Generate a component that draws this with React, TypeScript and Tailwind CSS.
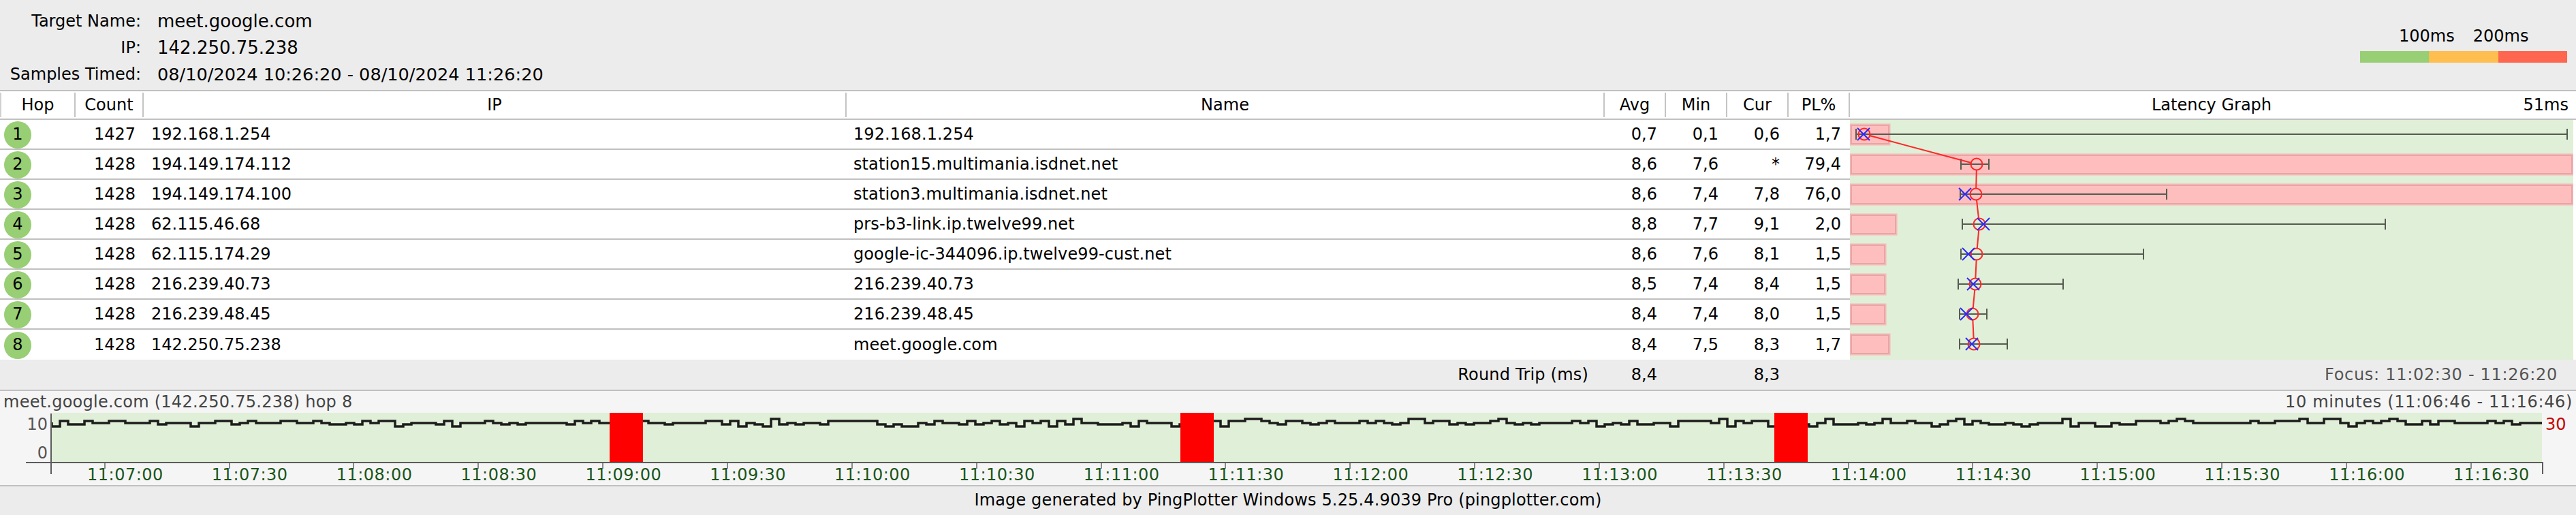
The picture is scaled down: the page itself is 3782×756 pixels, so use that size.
const hops = [
  { n: 1, count: 1427, ip: "192.168.1.254", name: "192.168.1.254", avg: "0,7", min: "0,1", cur: "0,6", pl: "1,7", barEnd: 2775, lo: 2725, hi: 3769, x: 2737, cross: 2736 },
  { n: 2, count: 1428, ip: "194.149.174.112", name: "station15.multimania.isdnet.net", avg: "8,6", min: "7,6", cur: "*", pl: "79,4", barEnd: 3778, lo: 2879, hi: 2920, x: 2902, cross: null },
  { n: 3, count: 1428, ip: "194.149.174.100", name: "station3.multimania.isdnet.net", avg: "8,6", min: "7,4", cur: "7,8", pl: "76,0", barEnd: 3778, lo: 2878, hi: 3181, x: 2901, cross: 2885 },
  { n: 4, count: 1428, ip: "62.115.46.68", name: "prs-b3-link.ip.twelve99.net", avg: "8,8", min: "7,7", cur: "9,1", pl: "2,0", barEnd: 2785, lo: 2881, hi: 3502, x: 2906, cross: 2912 },
  { n: 5, count: 1428, ip: "62.115.174.29", name: "google-ic-344096.ip.twelve99-cust.net", avg: "8,6", min: "7,6", cur: "8,1", pl: "1,5", barEnd: 2769, lo: 2879, hi: 3147, x: 2902, cross: 2890 },
  { n: 6, count: 1428, ip: "216.239.40.73", name: "216.239.40.73", avg: "8,5", min: "7,4", cur: "8,4", pl: "1,5", barEnd: 2769, lo: 2875, hi: 3029, x: 2900, cross: 2897 },
  { n: 7, count: 1428, ip: "216.239.48.45", name: "216.239.48.45", avg: "8,4", min: "7,4", cur: "8,0", pl: "1,5", barEnd: 2769, lo: 2877, hi: 2917, x: 2896, cross: 2887 },
  { n: 8, count: 1428, ip: "142.250.75.238", name: "meet.google.com", avg: "8,4", min: "7,5", cur: "8,3", pl: "1,7", barEnd: 2775, lo: 2877, hi: 2947, x: 2898, cross: 2895 },
];

const times = [
  "11:07:00", "11:07:30", "11:08:00", "11:08:30", "11:09:00", "11:09:30", "11:10:00",
  "11:10:30", "11:11:00", "11:11:30", "11:12:00", "11:12:30", "11:13:00", "11:13:30",
  "11:14:00", "11:14:30", "11:15:00", "11:15:30", "11:16:00", "11:16:30",
];

const outages = [895, 1733, 2605];

// stepped trace, fixed seed so each render is the same
function tracePath() {
  let seed = 7;
  const rnd = () => {
    seed = (seed * 16807) % 2147483647;
    return seed / 2147483647;
  };
  let d = "M76 620";
  for (let x = 76; x < 3732; x += 12) {
    const r = rnd();
    const y = r < 0.08 ? 626 : r < 0.3 ? 623 : r < 0.72 ? 621 : r < 0.94 ? 618 : 615;
    d += ` V${y} H${Math.min(x + 12, 3732)}`;
  }
  return d;
}

function LatencyGraph() {
  const cy = (i: number) => 198 + i * 44 - 1;
  return (
    <svg width={1062} height={352} viewBox="2716 176 1062 352" className="block shrink-0 bg-[#e0efd7]">
      {hops.map((h, i) => (
        <g key={h.n}>
          <rect x={2716} y={cy(i) - 15} width={h.barEnd - 2716} height={31} fill="#ffbebe" stroke="#f6b8b8" strokeWidth={1} />
          <rect x={2718} y={cy(i) - 13} width={h.barEnd - 2720} height={27} fill="none" stroke="#e6a6a6" strokeWidth={2} />
          <path
            d={`M${h.lo} ${cy(i)} H${h.hi} M${h.lo} ${cy(i) - 8} V${cy(i) + 8} M${h.hi} ${cy(i) - 8} V${cy(i) + 8}`}
            stroke="#565b50"
            strokeWidth={2}
            fill="none"
          />
        </g>
      ))}
      {hops.slice(1).map((h, i) => {
        const p = hops[i];
        const y1 = cy(i);
        const y2 = cy(i + 1);
        const len = Math.hypot(h.x - p.x, y2 - y1);
        const ux = (h.x - p.x) / len;
        const uy = (y2 - y1) / len;
        return (
          <line
            key={h.n}
            x1={p.x + ux * 9}
            y1={y1 + uy * 9}
            x2={h.x - ux * 9}
            y2={y2 - uy * 9}
            stroke="#ff2626"
            strokeWidth={2}
          />
        );
      })}
      {hops.map((h, i) => (
        <g key={h.n} fill="none">
          <circle cx={h.x} cy={cy(i)} r={8.5} stroke="#ff2626" strokeWidth={2} />
          {h.cross !== null && (
            <path
              d={`M${h.cross - 9} ${cy(i) - 9} L${h.cross + 9} ${cy(i) + 9} M${h.cross + 9} ${cy(i) - 9} L${h.cross - 9} ${cy(i) + 9}`}
              stroke="#2a2aff"
              strokeWidth={2}
            />
          )}
        </g>
      ))}
    </svg>
  );
}

function TimeChart() {
  return (
    <svg width={3658} height={76} viewBox="75 606 3658 76" className="block shrink-0 overflow-visible">
      <rect x={76} y={606} width={3656} height={72} fill="#e0efd7" />
      <path d={tracePath()} stroke="#1c1c1c" strokeWidth={3.5} fill="none" />
      {outages.map((x) => (
        <rect key={x} x={x} y={606} width={49} height={72} fill="#ff0000" />
      ))}
      <path d="M38 679 H3734 M75 607 V696 M3733 679 V696" stroke="#5c5c5c" strokeWidth={2} fill="none" />
      {times.map((t, i) => {
        const x = Math.round(153.7 + 182.85 * i);
        return <path key={t} d={`M${x} 680 V688`} stroke="#8a8a8a" strokeWidth={2} />;
      })}
    </svg>
  );
}

export default function App() {
  return (
    <div className="w-[3782px] h-[756px] overflow-hidden bg-[#ececec] text-black text-[24px] leading-[28px] font-['DejaVu_Sans',sans-serif] flex flex-col">
      <div className="h-[132px] flex justify-between">
        <div className="grid grid-cols-[207px_1fr] gap-x-[24px] gap-y-[11px] content-start pt-[17px] whitespace-nowrap">
          <div className="text-right">Target Name:</div>
          <div className="text-[26px]">meet.google.com</div>
          <div className="text-right">IP:</div>
          <div className="text-[26px]">142.250.75.238</div>
          <div className="text-right">Samples Timed:</div>
          <div className="text-[25.6px]">08/10/2024 10:26:20 - 08/10/2024 11:26:20</div>
        </div>
        <div className="w-[304px] mr-[13px] pt-[39px]">
          <div className="flex gap-[27px] pl-[57px]">
            <span>100ms</span>
            <span>200ms</span>
          </div>
          <div className="flex h-[17px] mt-[8px]">
            <div className="flex-1 bg-[#98ce74]" />
            <div className="flex-1 bg-[#ffbe50]" />
            <div className="flex-1 bg-[#ff6650]" />
          </div>
        </div>
      </div>

      <div className="h-[44px] bg-white border-y-2 border-[#c0c0c0] flex items-center text-center">
        <div className="w-[111px] h-[36px] leading-[36px] border-x-2 border-l-[#d0d0d0] border-r-[#c4c4c4]">Hop</div>
        <div className="w-[100px] h-[36px] leading-[36px] border-r-2 border-[#c4c4c4]">Count</div>
        <div className="w-[1032px] h-[36px] leading-[36px] border-r-2 border-[#c4c4c4]">IP</div>
        <div className="w-[1113px] h-[36px] leading-[36px] border-r-2 border-[#c4c4c4]">Name</div>
        <div className="w-[90px] h-[36px] leading-[36px] border-r-2 border-[#c4c4c4]">Avg</div>
        <div className="w-[90px] h-[36px] leading-[36px] border-r-2 border-[#c4c4c4]">Min</div>
        <div className="w-[90px] h-[36px] leading-[36px] border-r-2 border-[#c4c4c4]">Cur</div>
        <div className="w-[90px] h-[36px] leading-[36px] border-r-2 border-[#c4c4c4]">PL%</div>
        <div className="relative flex-1 h-[36px] leading-[36px] pr-[4px]">
          Latency Graph
          <span className="absolute right-[11px] top-0">51ms</span>
        </div>
      </div>

      <div className="flex h-[352px] bg-white">
        <div className="w-[2716px] shrink-0 flex flex-col">
          {hops.map((h) => (
            <div key={h.n} className="h-[44px] flex items-center border-b-2 border-[#c0c0c0] last:border-b-0 whitespace-nowrap">
              <div className="w-[111px] pl-[6px]">
                <div className="w-[40px] h-[40px] rounded-full bg-[#98ce74] text-center leading-[38px] mt-[2px]">{h.n}</div>
              </div>
              <div className="w-[88px] text-right">{h.count}</div>
              <div className="w-[1043px] pl-[23px]">{h.ip}</div>
              <div className="w-[1113px] pl-[11px] tracking-[0.1px]">{h.name}</div>
              <div className="w-[78px] text-right">{h.avg}</div>
              <div className="w-[90px] text-right">{h.min}</div>
              <div className="w-[90px] text-right">{h.cur}</div>
              <div className="w-[90px] text-right">{h.pl}</div>
            </div>
          ))}
        </div>
        <LatencyGraph />
      </div>

      <div className="h-[46px] border-b-2 border-[#c0c0c0] flex items-center whitespace-nowrap">
        <div className="w-[2332px] text-right tracking-[0.2px]">Round Trip (ms)</div>
        <div className="w-[101px] text-right">8,4</div>
        <div className="w-[180px] text-right">8,3</div>
        <div className="flex-1 text-right pr-[27px] text-[#555] tracking-[0.7px]">Focus: 11:02:30 - 11:26:20</div>
      </div>

      <div className="h-[140px] border-b-2 border-[#c0c0c0] bg-[#f5f5f5] flex flex-col whitespace-nowrap">
        <div className="h-[32px] flex justify-between items-center pl-[5px] pr-[5px] text-[#444]">
          <span className="tracking-[0.25px]">meet.google.com (142.250.75.238) hop 8</span>
          <span className="tracking-[0.65px]">10 minutes (11:06:46 - 11:16:46)</span>
        </div>
        <div className="h-[76px] flex">
          <div className="w-[75px] pr-[5px] pt-[3px] flex flex-col gap-[14px] text-right text-[#555]">
            <span>10</span>
            <span>0</span>
          </div>
          <TimeChart />
          <div className="pl-[4px] pt-[3px] text-[#c80000]">30</div>
        </div>
        <div className="h-[30px] flex items-center pl-[128px] text-[#1a561a] tracking-[0.5px]">
          {times.map((t) => (
            <div key={t} className="w-[182.85px] shrink-0">{t}</div>
          ))}
        </div>
      </div>

      <div className="flex-1 flex justify-center items-center pb-[2px] tracking-[0.15px]">
        Image generated by PingPlotter Windows 5.25.4.9039 Pro (pingplotter.com)
      </div>
    </div>
  );
}
